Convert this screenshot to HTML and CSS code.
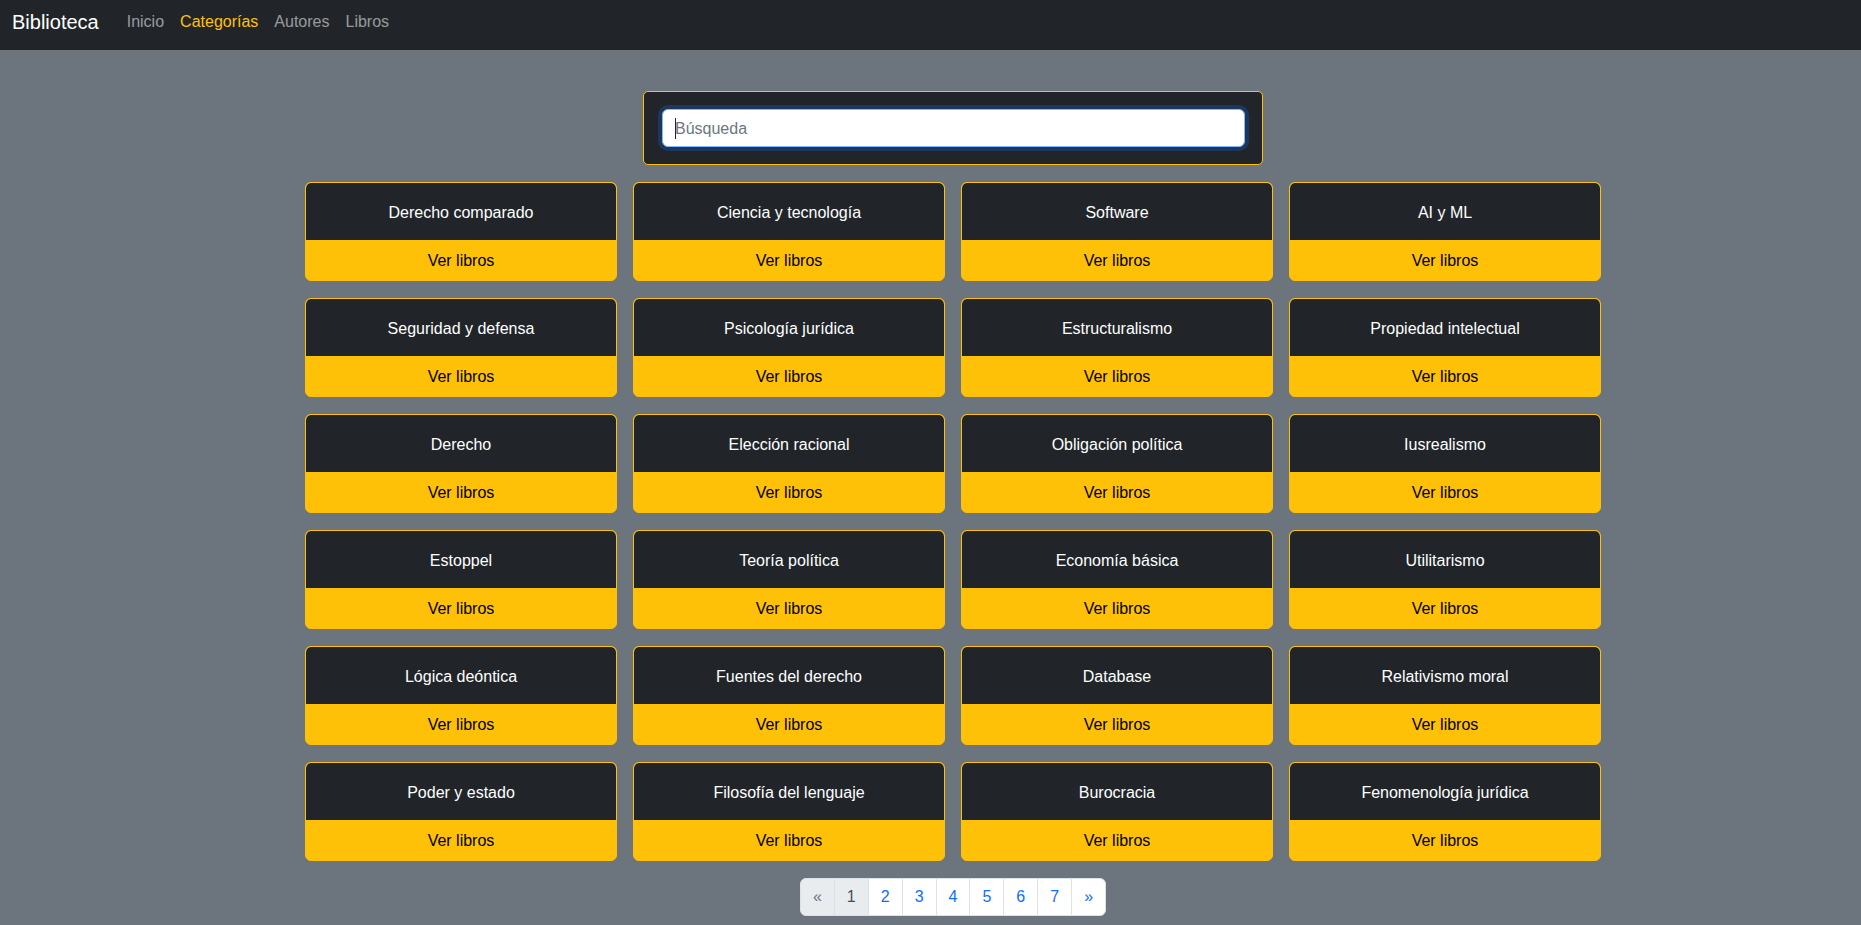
FILE: index.html
```html
<!DOCTYPE html>
<html lang="es">
<head>
<meta charset="utf-8">
<title>Biblioteca - Categorías</title>
<link rel="stylesheet" href="styles.css">
</head>
<body>
<nav class="navbar">
  <a class="brand" href="#">Biblioteca</a>
  <a class="nav-link" href="#">Inicio</a>
  <a class="nav-link active" href="#">Categorías</a>
  <a class="nav-link" href="#">Autores</a>
  <a class="nav-link" href="#">Libros</a>
</nav>
<main class="main">
  <div class="search-card">
    <div class="search-field">
      <input class="search-input" type="text" placeholder="Búsqueda">
      <span class="caret"></span>
    </div>
  </div>
  <div class="grid">
    <div class="card"><div class="card-title">Derecho comparado</div><a class="card-btn" href="#">Ver libros</a></div>
    <div class="card"><div class="card-title">Ciencia y tecnología</div><a class="card-btn" href="#">Ver libros</a></div>
    <div class="card"><div class="card-title">Software</div><a class="card-btn" href="#">Ver libros</a></div>
    <div class="card"><div class="card-title">AI y ML</div><a class="card-btn" href="#">Ver libros</a></div>
    <div class="card"><div class="card-title">Seguridad y defensa</div><a class="card-btn" href="#">Ver libros</a></div>
    <div class="card"><div class="card-title">Psicología jurídica</div><a class="card-btn" href="#">Ver libros</a></div>
    <div class="card"><div class="card-title">Estructuralismo</div><a class="card-btn" href="#">Ver libros</a></div>
    <div class="card"><div class="card-title">Propiedad intelectual</div><a class="card-btn" href="#">Ver libros</a></div>
    <div class="card"><div class="card-title">Derecho</div><a class="card-btn" href="#">Ver libros</a></div>
    <div class="card"><div class="card-title">Elección racional</div><a class="card-btn" href="#">Ver libros</a></div>
    <div class="card"><div class="card-title">Obligación política</div><a class="card-btn" href="#">Ver libros</a></div>
    <div class="card"><div class="card-title">Iusrealismo</div><a class="card-btn" href="#">Ver libros</a></div>
    <div class="card"><div class="card-title">Estoppel</div><a class="card-btn" href="#">Ver libros</a></div>
    <div class="card"><div class="card-title">Teoría política</div><a class="card-btn" href="#">Ver libros</a></div>
    <div class="card"><div class="card-title">Economía básica</div><a class="card-btn" href="#">Ver libros</a></div>
    <div class="card"><div class="card-title">Utilitarismo</div><a class="card-btn" href="#">Ver libros</a></div>
    <div class="card"><div class="card-title">Lógica deóntica</div><a class="card-btn" href="#">Ver libros</a></div>
    <div class="card"><div class="card-title">Fuentes del derecho</div><a class="card-btn" href="#">Ver libros</a></div>
    <div class="card"><div class="card-title">Database</div><a class="card-btn" href="#">Ver libros</a></div>
    <div class="card"><div class="card-title">Relativismo moral</div><a class="card-btn" href="#">Ver libros</a></div>
    <div class="card"><div class="card-title">Poder y estado</div><a class="card-btn" href="#">Ver libros</a></div>
    <div class="card"><div class="card-title">Filosofía del lenguaje</div><a class="card-btn" href="#">Ver libros</a></div>
    <div class="card"><div class="card-title">Burocracia</div><a class="card-btn" href="#">Ver libros</a></div>
    <div class="card"><div class="card-title">Fenomenología jurídica</div><a class="card-btn" href="#">Ver libros</a></div>
  </div>
  <ul class="pagination">
    <li class="page-item disabled"><span class="page-link">«</span></li>
    <li class="page-item current"><span class="page-link">1</span></li>
    <li class="page-item"><a class="page-link" href="#">2</a></li>
    <li class="page-item"><a class="page-link" href="#">3</a></li>
    <li class="page-item"><a class="page-link" href="#">4</a></li>
    <li class="page-item"><a class="page-link" href="#">5</a></li>
    <li class="page-item"><a class="page-link" href="#">6</a></li>
    <li class="page-item"><a class="page-link" href="#">7</a></li>
    <li class="page-item"><a class="page-link" href="#">»</a></li>
  </ul>
</main>
</body>
</html>
```

FILE: styles.css
```css
* { box-sizing: border-box; }

html, body {
  margin: 0;
  padding: 0;
}

body {
  background: #6c757d;
  font-family: "Liberation Sans", Arial, sans-serif;
  font-size: 16px;
  line-height: 1.5;
  color: #212529;
  min-height: 100vh;
}

a { text-decoration: none; }

.navbar {
  display: flex;
  align-items: center;
  height: 50px;
  padding: 0 12px 6px 12px;
  background: #212529;
}

.brand {
  color: #fff;
  font-size: 20px;
  line-height: 30px;
  margin-right: 20px;
}

.nav-link {
  color: rgba(255, 255, 255, 0.55);
  padding: 0 8px;
  font-size: 16px;
  line-height: 24px;
}

.nav-link.active {
  color: #ffc107;
}

.main {
  display: flex;
  flex-direction: column;
  align-items: center;
  padding: 41px 0 20px 45px;
}

.search-card {
  width: 620px;
  background: #212529;
  border: 1px solid #ffc107;
  border-radius: 5px;
  padding: 17px 17px 17px 18px;
}

.search-field {
  position: relative;
}

.search-input {
  display: block;
  width: 100%;
  height: 38px;
  padding: 7px 12px 5px 12px;
  font-family: "Liberation Sans", Arial, sans-serif;
  font-size: 16px;
  line-height: 24px;
  color: #212529;
  background: #fff;
  border: 1px solid #86b7fe;
  border-radius: 6px;
  outline: none;
  box-shadow: 0 0 0 4px rgba(13, 110, 253, 0.25);
}

.search-input::placeholder {
  color: #6c757d;
}

.caret {
  position: absolute;
  left: 13px;
  top: 9px;
  width: 1px;
  height: 21px;
  background: #212529;
}

.grid {
  display: grid;
  grid-template-columns: repeat(4, 312px);
  column-gap: 16px;
  row-gap: 17px;
  margin-top: 17px;
}

.card {
  display: flex;
  flex-direction: column;
  border: 1px solid #ffc107;
  border-radius: 6px;
  background: #ffc107;
  overflow: hidden;
}

.card-title {
  height: 57px;
  display: flex;
  align-items: center;
  justify-content: center;
  padding-top: 2px;
  background: #212529;
  color: #fff;
  border-radius: 5px 5px 0 0;
  font-size: 16px;
}

.card-btn {
  height: 40px;
  display: flex;
  align-items: center;
  justify-content: center;
  padding-top: 1px;
  color: #000;
  font-size: 16px;
}

.pagination {
  display: flex;
  list-style: none;
  margin: 17px 0 0 0;
  padding: 0;
}

.page-item + .page-item {
  margin-left: -1px;
}

.page-link {
  display: block;
  height: 38px;
  padding: 6px 12px;
  line-height: 24px;
  font-size: 16px;
  color: #0d6efd;
  background: #fff;
  border: 1px solid #dee2e6;
}

.page-item:first-child .page-link {
  border-radius: 6px 0 0 6px;
}

.page-item:last-child .page-link {
  border-radius: 0 6px 6px 0;
}

.page-item.disabled .page-link {
  color: #6c757d;
  background: #e9ecef;
}

.page-item.current .page-link {
  color: #495057;
  background: #e9ecef;
}
```
